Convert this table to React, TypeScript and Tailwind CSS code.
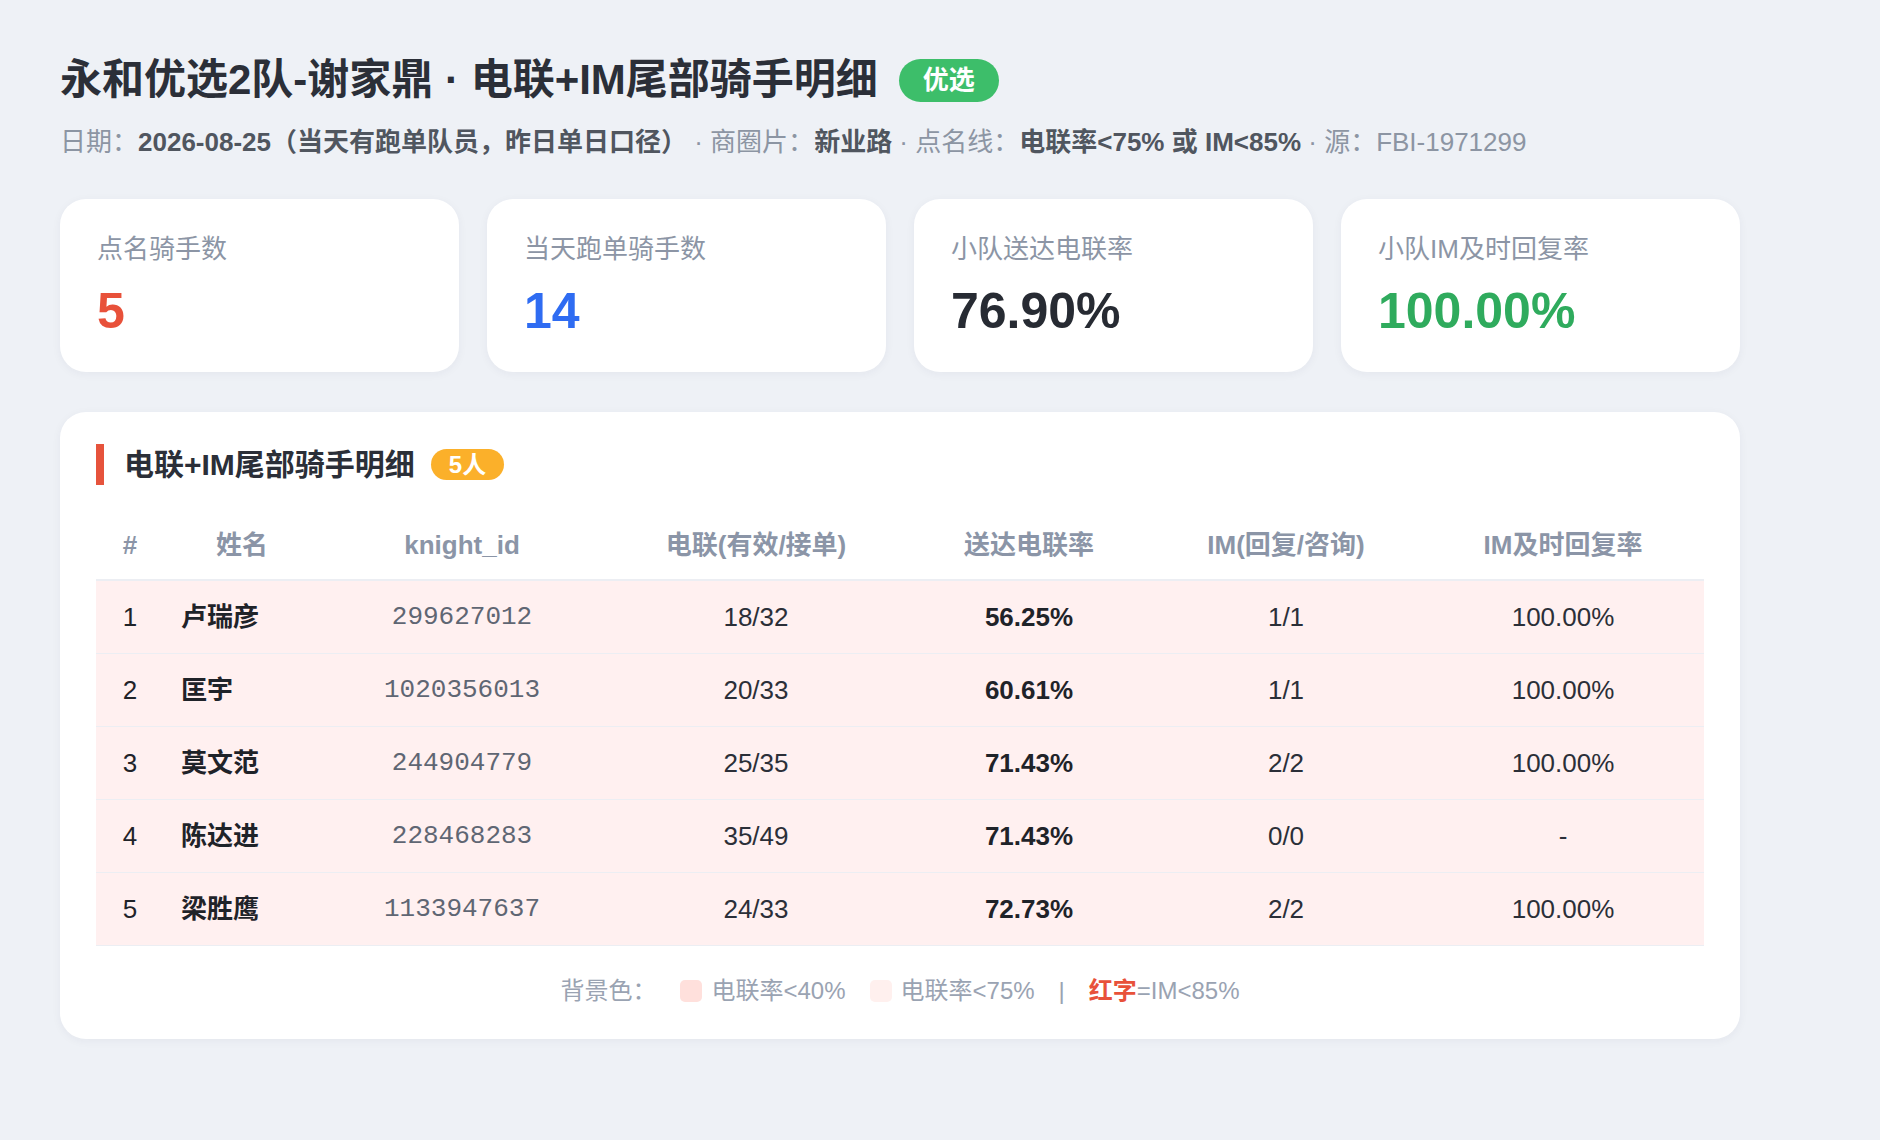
import React from 'react';

interface Rider {
  idx: number;
  name: string;
  knightId: string;
  calls: string;
  rate: string;
  im: string;
  imRate: string;
}

const riders: Rider[] = [
  { idx: 1, name: '卢瑞彦', knightId: '299627012', calls: '18/32', rate: '56.25%', im: '1/1', imRate: '100.00%' },
  { idx: 2, name: '匡宇', knightId: '1020356013', calls: '20/33', rate: '60.61%', im: '1/1', imRate: '100.00%' },
  { idx: 3, name: '莫文范', knightId: '244904779', calls: '25/35', rate: '71.43%', im: '2/2', imRate: '100.00%' },
  { idx: 4, name: '陈达进', knightId: '228468283', calls: '35/49', rate: '71.43%', im: '0/0', imRate: '-' },
  { idx: 5, name: '梁胜鹰', knightId: '1133947637', calls: '24/33', rate: '72.73%', im: '2/2', imRate: '100.00%' },
];

const stats = [
  { label: '点名骑手数', value: '5', color: 'text-[#e8513a]' },
  { label: '当天跑单骑手数', value: '14', color: 'text-[#2f6cf2]' },
  { label: '小队送达电联率', value: '76.90%', color: 'text-[#272b33]' },
  { label: '小队IM及时回复率', value: '100.00%', color: 'text-[#2fab5d]' },
];

const cols = 'grid grid-cols-[68px_156px_284px_304px_242px_272px_282px]';

export default function App() {
  return (
    <div
      className="min-h-screen bg-[#eef1f6] px-[60px] pt-[55px] pb-[60px]"
      style={{ fontFamily: '"Liberation Sans", "Noto Sans CJK SC", sans-serif' }}
    >
      <div className="w-[1680px]">
        {/* Header */}
        <div className="flex items-center gap-[21px] h-[50px]">
          <h1 className="text-[42px] leading-[50px] font-bold text-[#2b2f38]">
            永和优选2队-谢家鼎 · 电联+IM尾部骑手明细
          </h1>
          <span className="h-[43px] leading-[43px] px-[24px] rounded-full bg-[#3dbe6a] text-white text-[26px] font-bold">
            优选
          </span>
        </div>
        <p className="mt-[19px] text-[26px] leading-[36px] text-[#8c95a3] whitespace-nowrap">
          日期：<b className="text-[#50565f]">2026-08-25（当天有跑单队员，昨日单日口径）</b> · 商圈片：
          <b className="text-[#50565f]">新业路</b> · 点名线：
          <b className="text-[#50565f]">电联率&lt;75% 或 IM&lt;85%</b> · 源：FBI-1971299
        </p>

        {/* Stat cards */}
        <div className="mt-[39px] grid grid-cols-4 gap-[28px]">
          {stats.map((s) => (
            <div
              key={s.label}
              className="h-[173px] bg-white rounded-[26px] px-[37px] pt-[33px] shadow-[0_2px_10px_rgba(30,40,70,0.05)]"
            >
              <div className="text-[26px] leading-[34px] text-[#8c95a5]">{s.label}</div>
              <div className={`mt-[17px] text-[50px] leading-[56px] font-bold ${s.color}`}>{s.value}</div>
            </div>
          ))}
        </div>

        {/* Detail panel */}
        <div className="mt-[40px] bg-white rounded-[26px] px-[36px] pt-[32px] pb-[32px] shadow-[0_2px_10px_rgba(30,40,70,0.05)]">
          <div className="flex items-center h-[41px]">
            <div className="w-[8px] h-[41px] bg-[#e6533c]" />
            <h2 className="ml-[20px] text-[30px] leading-[41px] font-bold text-[#2b2f38]">
              电联+IM尾部骑手明细
            </h2>
            <span className="ml-[16px] h-[31px] leading-[31px] px-[18px] rounded-full bg-[#fbb02a] text-white text-[24px] font-bold">
              5人
            </span>
          </div>

          <div className="mt-[26px] text-[26px]">
            <div className={`${cols} h-[70px] items-center border-b-2 border-[#eceef3] font-bold text-[#8b95a7]`}>
              <div className="text-center">#</div>
              <div className="text-center">姓名</div>
              <div className="text-center">knight_id</div>
              <div className="text-center">电联(有效/接单)</div>
              <div className="text-center">送达电联率</div>
              <div className="text-center">IM(回复/咨询)</div>
              <div className="text-center">IM及时回复率</div>
            </div>
            {riders.map((r) => (
              <div
                key={r.idx}
                className={`${cols} h-[73px] items-center bg-[#fff0f0] border-b border-[#eceef3] text-[#2b2f38]`}
              >
                <div className="text-center text-[#1f2329]">{r.idx}</div>
                <div className="pl-[17px] font-bold text-[#1f2329]">{r.name}</div>
                <div
                  className="text-center text-[#5f6673]"
                  style={{ fontFamily: '"Liberation Mono", monospace' }}
                >
                  {r.knightId}
                </div>
                <div className="text-center">{r.calls}</div>
                <div className="text-center font-bold text-[#1f2329]">{r.rate}</div>
                <div className="text-center">{r.im}</div>
                <div className="text-center">{r.imRate}</div>
              </div>
            ))}
          </div>

          {/* Legend */}
          <div className="mt-[29px] flex items-center justify-center h-[32px] text-[24px] text-[#9aa3b2]">
            <span>背景色：</span>
            <span className="ml-[24px] w-[22px] h-[22px] rounded-[5px] bg-[#ffe0dc]" />
            <span className="ml-[9px]">电联率&lt;40%</span>
            <span className="ml-[24px] w-[22px] h-[22px] rounded-[5px] bg-[#fff0ee]" />
            <span className="ml-[9px]">电联率&lt;75%</span>
            <span className="mx-[24px]">|</span>
            <span className="font-bold text-[#e8513a]">红字</span>
            <span>=IM&lt;85%</span>
          </div>
        </div>
      </div>
    </div>
  );
}
